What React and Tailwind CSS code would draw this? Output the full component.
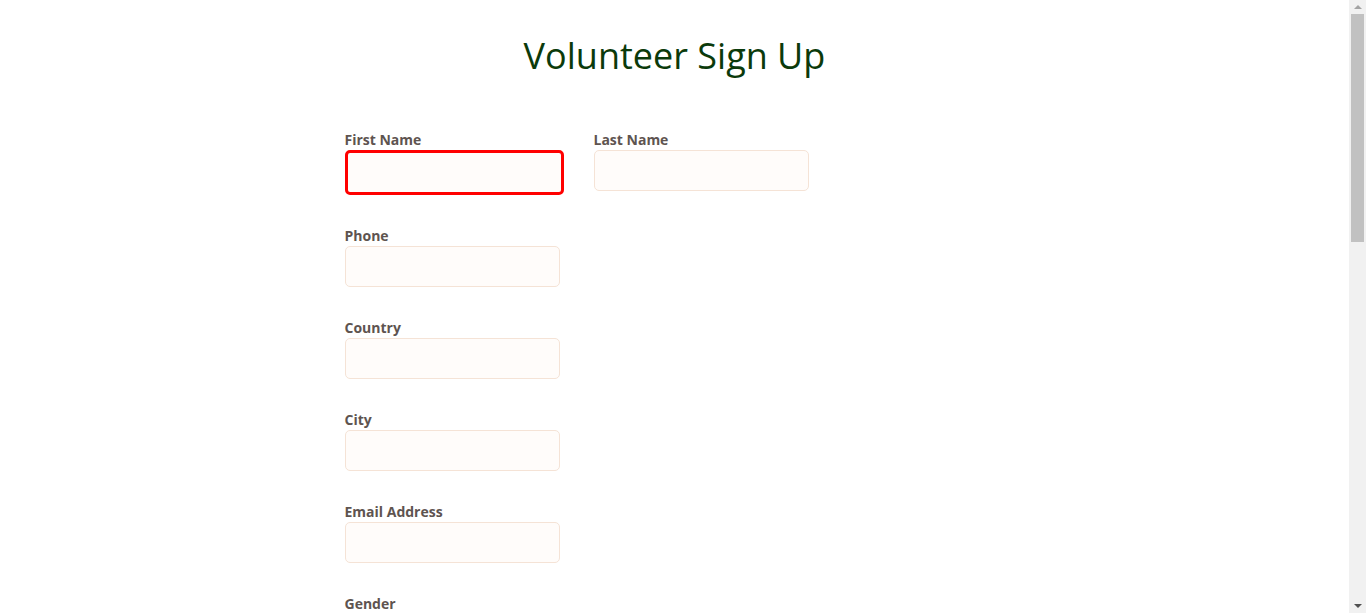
export default function App() {
  const font = { fontFamily: '"Open Sans", "Noto Sans", sans-serif' };
  const Field = ({ label, focused, type = "text" }) => (
    <div className="w-[249px] flex flex-col items-start">
      <label className="block text-[14px] leading-[20px] font-bold text-[#5e5450]">{label}</label>
      <input
        type={type}
        className={
          focused
            ? "w-[219px] h-[45px] rounded-[5px] border-[3px] border-[#ff0000] bg-[#fffcfa] outline-none px-2"
            : "w-[215px] h-[41px] rounded-[5px] border border-[#f5e3d6] bg-[#fffcfa] outline-none px-2"
        }
      />
    </div>
  );
  return (
    <div className="flex h-[613px] overflow-hidden bg-white" style={font}>
      <div className="flex-1 min-w-0 overflow-hidden">
        <h1 className="pt-[31px] text-center text-[36px] leading-[49px] font-normal text-[#0b3a0b]">
          Volunteer Sign Up
        </h1>
        <form className="w-[660px] mx-auto mt-[50px] flex flex-col gap-[31px] pb-[80px]">
          <div className="flex">
            <Field label="First Name" focused />
            <Field label="Last Name" />
          </div>
          <div className="flex"><Field label="Phone" /></div>
          <div className="flex"><Field label="Country" /></div>
          <div className="flex"><Field label="City" /></div>
          <div className="flex"><Field label="Email Address" type="email" /></div>
          <div className="flex flex-col">
            <label className="block text-[14px] leading-[20px] font-bold text-[#5e5450]">Gender</label>
            <div className="flex flex-col gap-2 mt-2 text-[14px] text-[#5e5450]">
              <label className="flex items-center gap-2"><input type="radio" name="g" /> Male</label>
              <label className="flex items-center gap-2"><input type="radio" name="g" /> Female</label>
            </div>
          </div>
        </form>
      </div>
      <div className="w-[17px] h-full bg-[#f1f1f1] flex flex-col items-center shrink-0">
        <div className="h-[14px] w-full flex items-center justify-center">
          <div className="w-0 h-0 border-l-[4px] border-r-[4px] border-b-[4px] border-l-transparent border-r-transparent border-b-[#a3a3a3]" />
        </div>
        <div className="w-[13px] h-[228px] bg-[#c1c1c1]" />
        <div className="flex-1" />
        <div className="h-[14px] w-full flex items-center justify-center">
          <div className="w-0 h-0 border-l-[4px] border-r-[4px] border-t-[4px] border-l-transparent border-r-transparent border-t-[#505050]" />
        </div>
      </div>
    </div>
  );
}
